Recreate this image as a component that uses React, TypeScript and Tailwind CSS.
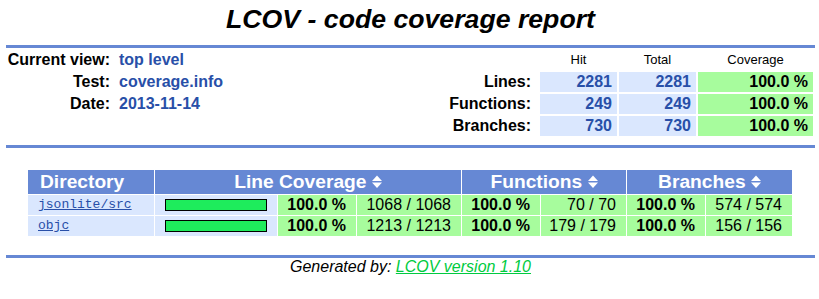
import { FC } from 'react';

const SortIcon: FC = () => (
  <svg width="10" height="14" viewBox="0 0 10 14" className="inline-block align-baseline">
    <polygon points="5,1.5 10,7 0,7" fill="#ffffff" />
    <polygon points="0,8.5 10,8.5 5,14" fill="#ffffff" />
  </svg>
);

const Rule: FC<{ className?: string }> = ({ className = '' }) => (
  <div className={`ml-[6px] mr-[4px] h-[3px] bg-[#6688d4] ${className}`} />
);

const summary = [
  { item: 'Current view:', value: 'top level', label: '', hit: '', total: '', cov: '', head: true },
  { item: 'Test:', value: 'coverage.info', label: 'Lines:', hit: '2281', total: '2281', cov: '100.0 %' },
  { item: 'Date:', value: '2013-11-14', label: 'Functions:', hit: '249', total: '249', cov: '100.0 %' },
  { item: '', value: '', label: 'Branches:', hit: '730', total: '730', cov: '100.0 %' },
];

const dirs = [
  { name: 'jsonlite/src', lines: '1068 / 1068', funcs: '70 / 70', branches: '574 / 574' },
  { name: 'objc', lines: '1213 / 1213', funcs: '179 / 179', branches: '156 / 156' },
];

export default function App() {
  return (
    <main className="h-[299px] w-[819px] overflow-hidden bg-white font-['Liberation_Sans',Arial,sans-serif] text-black">
      <h1 className="pl-[6px] pr-[4px] pt-[4px] text-center text-[26.67px] font-bold italic leading-[30px]">
        LCOV - code coverage report
      </h1>

      <Rule className="mt-[11px]" />

      {/* summary */}
      <section className="mt-[2px] flex flex-col gap-[2px] text-[16px] font-bold leading-[20px]">
        {summary.map((r, i) => (
          <div key={i} className="flex h-[20px]">
            <div className="w-[110px] text-right">{r.item}</div>
            <div className="ml-[9px] w-[200px] text-[#284fa8]">{r.value}</div>
            <div className="w-[212px] text-right">{r.label}</div>
            {r.head ? (
              <>
                <div className="ml-[9px] w-[77px] text-center text-[13px] font-normal">Hit</div>
                <div className="ml-[2px] w-[77px] text-center text-[13px] font-normal">Total</div>
                <div className="ml-[2px] w-[115px] text-center text-[13px] font-normal">Coverage</div>
              </>
            ) : (
              <>
                <div className="ml-[9px] w-[77px] bg-[#dae7fe] pr-[5px] text-right text-[#284fa8]">{r.hit}</div>
                <div className="ml-[2px] w-[77px] bg-[#dae7fe] pr-[5px] text-right text-[#284fa8]">{r.total}</div>
                <div className="ml-[2px] w-[115px] bg-[#a7fc9d] pr-[5px] text-right">{r.cov}</div>
              </>
            )}
          </div>
        ))}
      </section>

      <Rule className="mt-[9px]" />

      {/* directory table */}
      <section className="ml-[28px] mt-[22px] grid w-[764px] grid-cols-[126px_122px_78px_104px_78px_85px_78px_86px] gap-[1px] text-[16px] leading-[20px]">
        <div className="h-[24px] bg-[#6688d4] pl-[12px] text-[19.2px] font-bold leading-[24px] text-white">Directory</div>
        <div className="col-span-3 h-[24px] whitespace-nowrap bg-[#6688d4] text-center text-[19.2px] font-bold leading-[24px] text-white">
          Line Coverage <SortIcon />
        </div>
        <div className="col-span-2 h-[24px] whitespace-nowrap bg-[#6688d4] text-center text-[19.2px] font-bold leading-[24px] text-white">
          Functions <SortIcon />
        </div>
        <div className="col-span-2 h-[24px] whitespace-nowrap bg-[#6688d4] text-center text-[19.2px] font-bold leading-[24px] text-white">
          Branches <SortIcon />
        </div>

        {dirs.map((d) => (
          <div key={d.name} className="contents">
            <div className="h-[20px] bg-[#dae7fe] pl-[10px] font-['Liberation_Mono','Courier_New',monospace] text-[13px] leading-[20px] text-[#284fa8] underline">
              {d.name}
            </div>
            <div className="flex h-[20px] items-center bg-[#dae7fe] pl-[10px]">
              <div className="h-[12px] w-[102px] border border-black bg-[#1eec5c]" />
            </div>
            <div className="h-[20px] whitespace-nowrap bg-[#a7fc9d] pr-[10px] text-right font-bold">100.0&nbsp;%</div>
            <div className="h-[20px] whitespace-nowrap bg-[#a7fc9d] pr-[10px] text-right">{d.lines}</div>
            <div className="h-[20px] whitespace-nowrap bg-[#a7fc9d] pr-[10px] text-right font-bold">100.0&nbsp;%</div>
            <div className="h-[20px] whitespace-nowrap bg-[#a7fc9d] pr-[10px] text-right">{d.funcs}</div>
            <div className="h-[20px] whitespace-nowrap bg-[#a7fc9d] pr-[10px] text-right font-bold">100.0&nbsp;%</div>
            <div className="h-[20px] whitespace-nowrap bg-[#a7fc9d] pr-[10px] text-right">{d.branches}</div>
          </div>
        ))}
      </section>

      <Rule className="mt-[19px]" />

      <footer className="pl-[6px] pr-[4px] text-center text-[16px] italic leading-[18px]">
        Generated by: <a className="text-[#00cb40] underline">LCOV version 1.10</a>
      </footer>
    </main>
  );
}
